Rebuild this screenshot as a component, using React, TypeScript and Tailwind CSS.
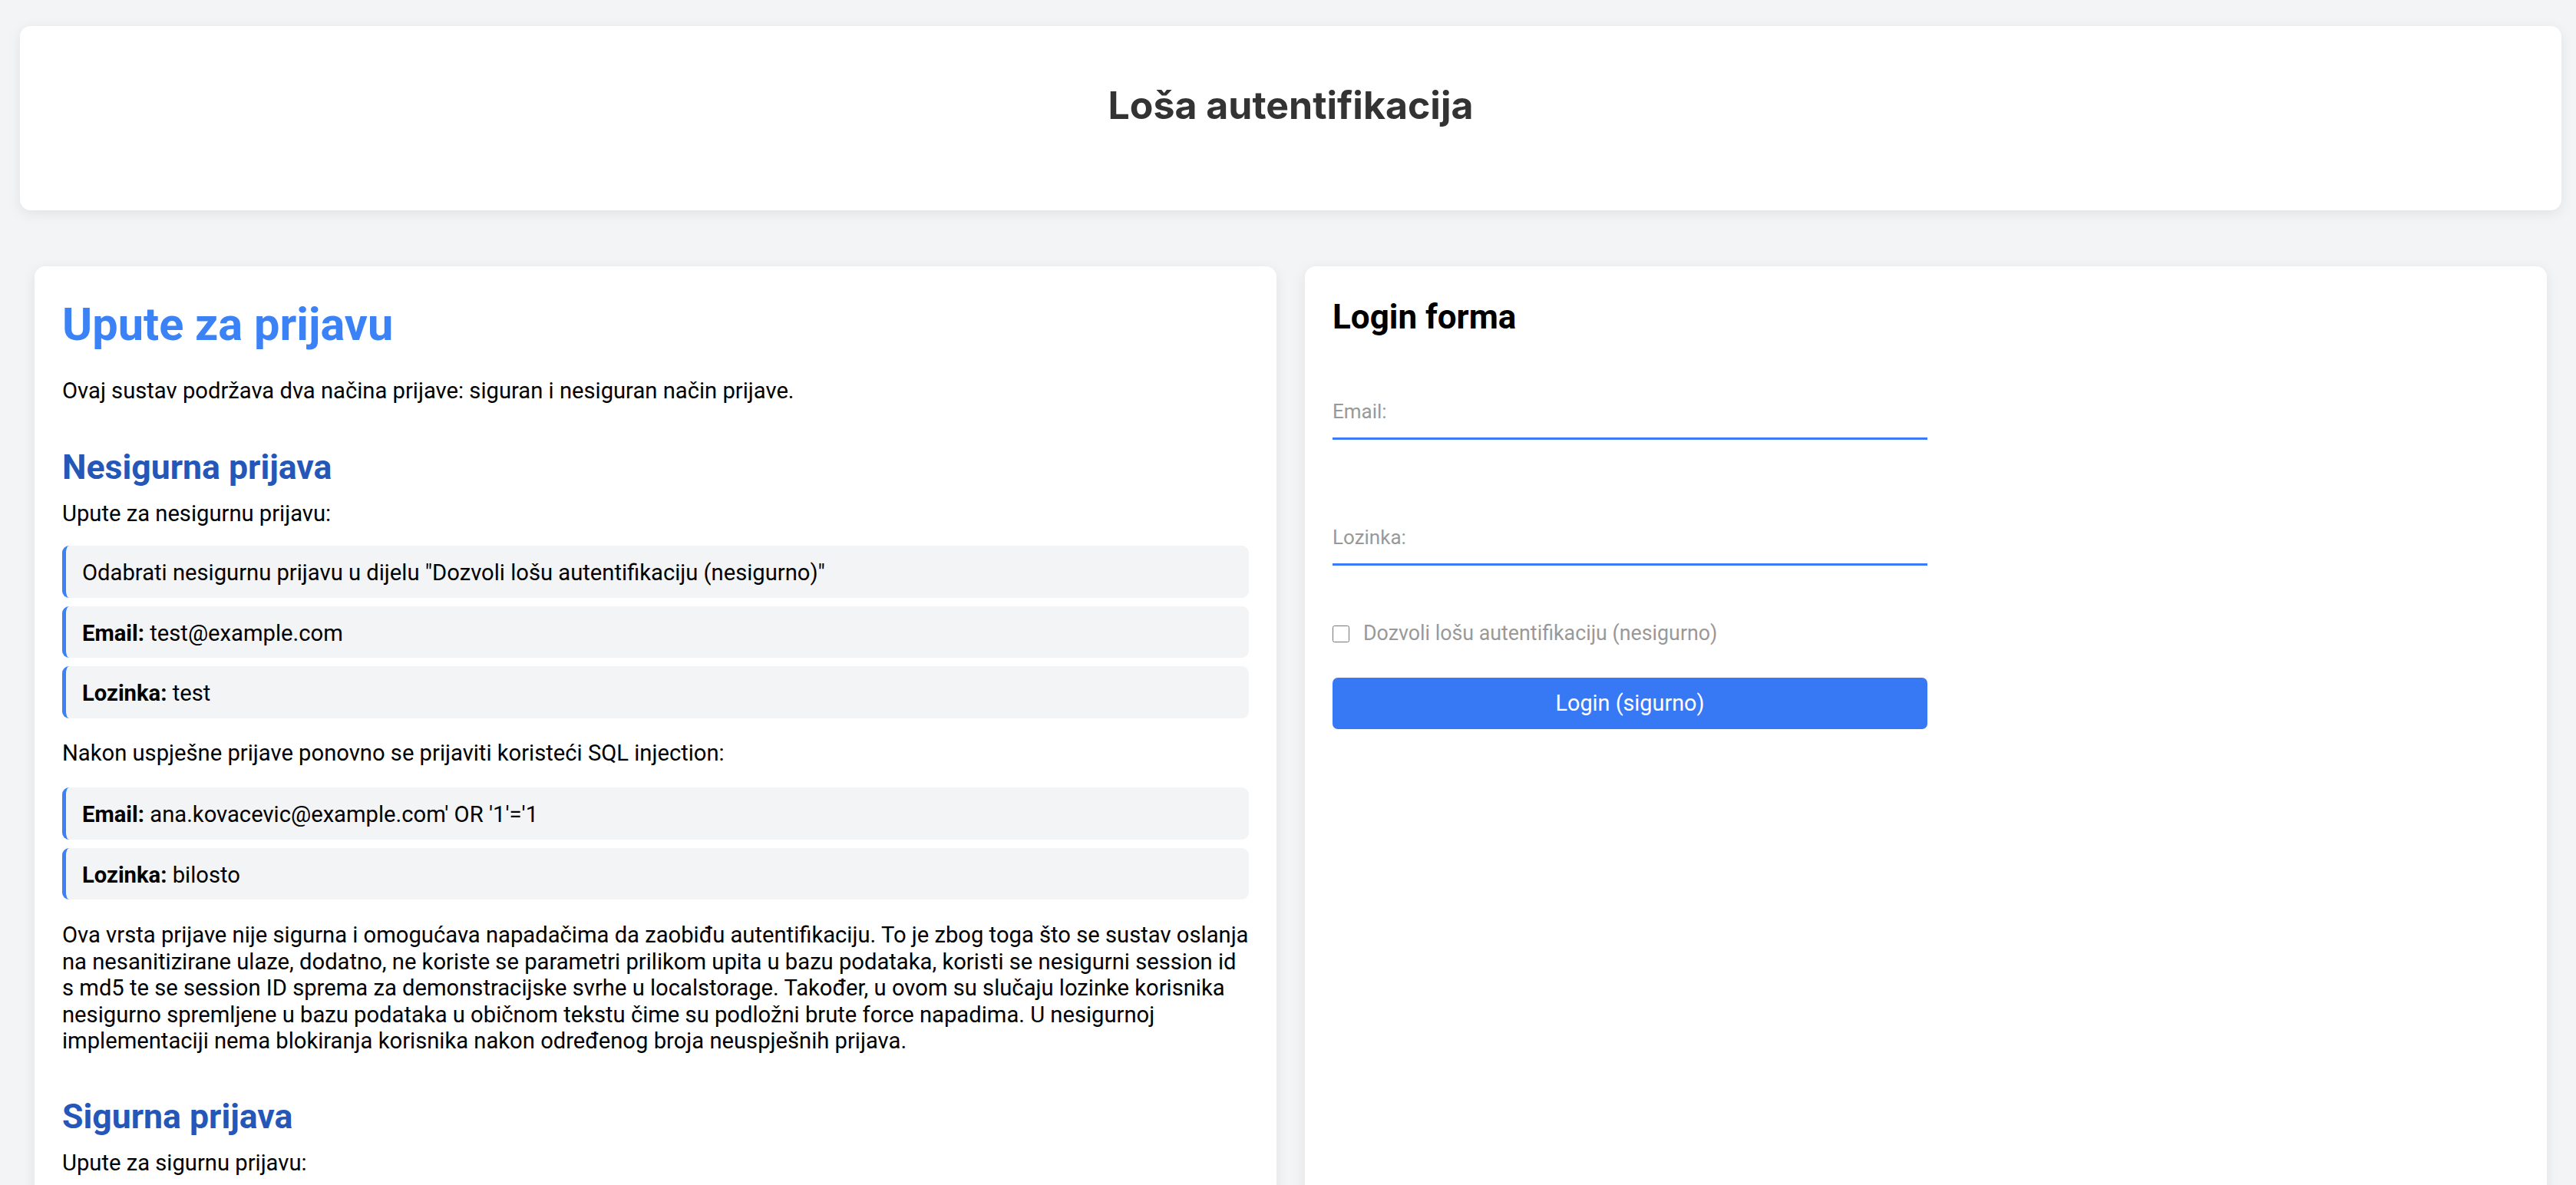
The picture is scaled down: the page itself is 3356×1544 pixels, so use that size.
import { FC } from "react";

const InfoBox: FC<{ label?: string; children: React.ReactNode }> = ({ label, children }) => (
    <div className="bg-[#f3f4f6] border-l-[5px] border-[#3b82f6] rounded-[9px] px-[21px] pt-[18px] pb-[15px] leading-[34.5px]">
        {label && <span className="font-bold">{label} </span>}
        {children}
    </div>
);

const App: FC = () => {
    return (
        <div
            className="min-h-screen bg-[#f3f4f6] pl-[26px] pr-[19px] pt-[34px] pb-[40px] text-black"
            style={{ fontFamily: "Inter, 'Noto Sans', sans-serif" }}
        >
            {/* Header */}
            <header className="bg-white rounded-[14px] h-[240px] pb-[34px] flex items-center justify-center shadow-[0_4px_18px_rgba(0,0,0,0.08)]">
                <h1 className="text-[50px] font-bold text-[#333] leading-none">Loša autentifikacija</h1>
            </header>

            <div
                className="grid grid-cols-2 gap-[37px] mx-[19px] mt-[73px]"
                style={{ fontFamily: "Roboto, 'Noto Sans', sans-serif" }}
            >
                {/* Instructions */}
                <div className="bg-white rounded-[14px] px-[36px] pt-[42px] pb-[40px] shadow-[0_4px_18px_rgba(0,0,0,0.08)] text-[29.2px] leading-[34.5px]">
                    <h2 className="text-[59.5px] font-bold text-[#3b82f6] leading-[69px]">Upute za prijavu</h2>
                    <p className="mt-[34px]">Ovaj sustav podržava dva načina prijave: siguran i nesiguran način prijave.</p>

                    <h3 className="mt-[56px] text-[44.6px] font-bold text-[#2457b8] leading-[52px]">Nesigurna prijava</h3>
                    <p className="mt-[17px]">Upute za nesigurnu prijavu:</p>
                    <div className="mt-[25px] flex flex-col gap-[11px]">
                        <InfoBox>Odabrati nesigurnu prijavu u dijelu "Dozvoli lošu autentifikaciju (nesigurno)"</InfoBox>
                        <InfoBox label="Email:">test@example.com</InfoBox>
                        <InfoBox label="Lozinka:">test</InfoBox>
                    </div>

                    <p className="mt-[28px]">Nakon uspješne prijave ponovno se prijaviti koristeći SQL injection:</p>
                    <div className="mt-[28px] flex flex-col gap-[11px]">
                        <InfoBox label="Email:">ana.kovacevic@example.com' OR '1'='1</InfoBox>
                        <InfoBox label="Lozinka:">bilosto</InfoBox>
                    </div>

                    <p className="mt-[29px]">
                        Ova vrsta prijave nije sigurna i omogućava napadačima da zaobiđu autentifikaciju. To je zbog toga što se sustav oslanja na nesanitizirane ulaze, dodatno, ne koriste se parametri prilikom upita u bazu podataka, koristi se nesigurni session id s md5 te se session ID sprema za demonstracijske svrhe u localstorage. Također, u ovom su slučaju lozinke korisnika nesigurno spremljene u bazu podataka u običnom tekstu čime su podložni brute force napadima. U nesigurnoj implementaciji nema blokiranja korisnika nakon određenog broja neuspješnih prijava.
                    </p>

                    <h3 className="mt-[55px] text-[44.6px] font-bold text-[#2457b8] leading-[52px]">Sigurna prijava</h3>
                    <p className="mt-[17px]">Upute za sigurnu prijavu:</p>
                    <div className="mt-[25px] flex flex-col gap-[11px]">
                        <InfoBox>Ne označiti "Dozvoli lošu autentifikaciju (nesigurno)"</InfoBox>
                        <InfoBox label="Email:">test@example.com</InfoBox>
                        <InfoBox label="Lozinka:">test</InfoBox>
                    </div>
                </div>

                {/* Login form */}
                <div className="bg-white rounded-[14px] px-[36px] pt-[40px] pb-[40px] shadow-[0_4px_18px_rgba(0,0,0,0.08)] self-stretch">
                    <h2 className="text-[44px] font-bold leading-[52px]">Login forma</h2>
                    <form className="w-[775px] flex flex-col" onSubmit={(e) => e.preventDefault()}>
                        <input
                            type="email"
                            placeholder="Email:"
                            className="mt-[64px] w-full py-[18px] text-[26px] leading-[31px] border-b-[3.6px] border-[#3b7bf6] outline-none placeholder:text-[#999]"
                        />
                        <input
                            type="password"
                            placeholder="Lozinka:"
                            className="mt-[94px] w-full py-[18px] text-[26px] leading-[31px] border-b-[3.6px] border-[#3b7bf6] outline-none placeholder:text-[#999]"
                        />
                        <label className="mt-[73px] flex items-center gap-[18px] text-[26.8px] leading-[31px] text-[#999]">
                            <input type="checkbox" className="w-[22px] h-[22px] m-0" />
                            Dozvoli lošu autentifikaciju (nesigurno)
                        </label>
                        <button
                            type="submit"
                            className="mt-[42px] h-[67px] w-full bg-[#3779f5] text-white text-[28.8px] rounded-[7px]"
                        >
                            Login (sigurno)
                        </button>
                    </form>
                </div>
            </div>
        </div>
    );
};

export default App;
